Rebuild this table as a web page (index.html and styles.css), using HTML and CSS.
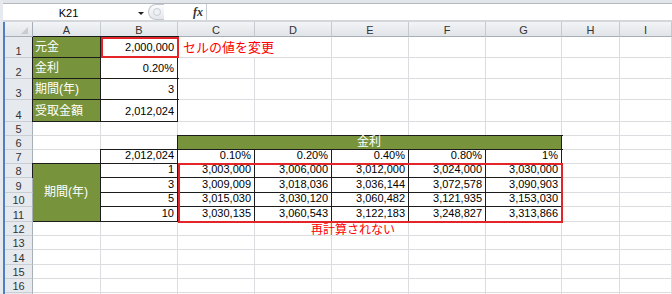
FILE: index.html
```html
<!DOCTYPE html>
<html lang="ja">
<head>
<meta charset="utf-8">
<title>Book1</title>
<link rel="stylesheet" href="styles.css">
</head>
<body>
<div class="app">
  <div class="fbar">
    <div class="namebox"><span class="name">K21</span><span class="dd"></span></div>
    <div class="grip"><span class="dot"></span></div>
    <div class="fx">fx</div>
    <div class="finput"></div>
  </div>
  <div class="sheetwrap">
    <div class="sheet">
      <!-- column headers -->
      <div class="corner"></div>
      <div class="h">A</div><div class="h">B</div><div class="h">C</div><div class="h">D</div><div class="h">E</div><div class="h">F</div><div class="h">G</div><div class="h">H</div><div class="h">I</div>

      <!-- 1 -->
      <div class="rh">1</div>
      <div class="c g bx t">元金</div>
      <div class="c r bx t">2,000,000</div>
      <div class="c note t span2">セルの値を変更</div>
      <div class="c"></div><div class="c"></div><div class="c"></div><div class="c"></div><div class="c"></div>

      <!-- 2 -->
      <div class="rh">2</div>
      <div class="c g bx t">金利</div>
      <div class="c r bx t">0.20%</div>
      <div class="c"></div><div class="c"></div><div class="c"></div><div class="c"></div><div class="c"></div><div class="c"></div><div class="c"></div>

      <!-- 3 -->
      <div class="rh">3</div>
      <div class="c g bx t">期間(年)</div>
      <div class="c r bx t">3</div>
      <div class="c"></div><div class="c"></div><div class="c"></div><div class="c"></div><div class="c"></div><div class="c"></div><div class="c"></div>

      <!-- 4 -->
      <div class="rh">4</div>
      <div class="c g bx t">受取金額</div>
      <div class="c r bx t">2,012,024</div>
      <div class="c"></div><div class="c"></div><div class="c"></div><div class="c"></div><div class="c"></div><div class="c"></div><div class="c"></div>

      <!-- 5 -->
      <div class="rh">5</div>
      <div class="c"></div><div class="c"></div><div class="c"></div><div class="c"></div><div class="c"></div><div class="c"></div><div class="c"></div><div class="c"></div><div class="c"></div>

      <!-- 6 -->
      <div class="rh">6</div>
      <div class="c"></div><div class="c"></div>
      <div class="c g bx mid span5">金利</div>
      <div class="c"></div><div class="c"></div>

      <!-- 7 -->
      <div class="rh">7</div>
      <div class="c"></div>
      <div class="c r bx">2,012,024</div>
      <div class="c r bx">0.10%</div>
      <div class="c r bx">0.20%</div>
      <div class="c r bx">0.40%</div>
      <div class="c r bx">0.80%</div>
      <div class="c r bx">1%</div>
      <div class="c"></div><div class="c"></div>

      <!-- 8 -->
      <div class="rh">8</div>
      <div class="c g bx mid rows4">期間(年)</div>
      <div class="c r bx">1</div>
      <div class="c r bx">3,003,000</div>
      <div class="c r bx">3,006,000</div>
      <div class="c r bx">3,012,000</div>
      <div class="c r bx">3,024,000</div>
      <div class="c r bx">3,030,000</div>
      <div class="c"></div><div class="c"></div>

      <!-- 9 -->
      <div class="rh">9</div>
      <div class="c r bx">3</div>
      <div class="c r bx">3,009,009</div>
      <div class="c r bx">3,018,036</div>
      <div class="c r bx">3,036,144</div>
      <div class="c r bx">3,072,578</div>
      <div class="c r bx">3,090,903</div>
      <div class="c"></div><div class="c"></div>

      <!-- 10 -->
      <div class="rh">10</div>
      <div class="c r bx">5</div>
      <div class="c r bx">3,015,030</div>
      <div class="c r bx">3,030,120</div>
      <div class="c r bx">3,060,482</div>
      <div class="c r bx">3,121,935</div>
      <div class="c r bx">3,153,030</div>
      <div class="c"></div><div class="c"></div>

      <!-- 11 -->
      <div class="rh">11</div>
      <div class="c r bx">10</div>
      <div class="c r bx">3,030,135</div>
      <div class="c r bx">3,060,543</div>
      <div class="c r bx">3,122,183</div>
      <div class="c r bx">3,248,827</div>
      <div class="c r bx">3,313,866</div>
      <div class="c"></div><div class="c"></div>

      <!-- 12 -->
      <div class="rh">12</div>
      <div class="c"></div><div class="c"></div><div class="c"></div>
      <div class="c note2 span2"><span>再計算されない</span></div>
      <div class="c"></div><div class="c"></div><div class="c"></div><div class="c"></div>

      <!-- 13 -->
      <div class="rh">13</div>
      <div class="c"></div><div class="c"></div><div class="c"></div><div class="c"></div><div class="c"></div><div class="c"></div><div class="c"></div><div class="c"></div><div class="c"></div>

      <!-- 14 -->
      <div class="rh">14</div>
      <div class="c"></div><div class="c"></div><div class="c"></div><div class="c"></div><div class="c"></div><div class="c"></div><div class="c"></div><div class="c"></div><div class="c"></div>

      <!-- 15 -->
      <div class="rh">15</div>
      <div class="c"></div><div class="c"></div><div class="c"></div><div class="c"></div><div class="c"></div><div class="c"></div><div class="c"></div><div class="c"></div><div class="c"></div>

      <!-- 16 -->
      <div class="rh">16</div>
      <div class="c"></div><div class="c"></div><div class="c"></div><div class="c"></div><div class="c"></div><div class="c"></div><div class="c"></div><div class="c"></div><div class="c"></div>

      <!-- 17, only its top edge shows -->
      <div class="rh"></div>
      <div class="c"></div><div class="c"></div><div class="c"></div><div class="c"></div><div class="c"></div><div class="c"></div><div class="c"></div><div class="c"></div><div class="c"></div>
    </div>

    <!-- thick red outlines drawn over the cells -->
    <div class="outline outline-input"></div>
    <div class="outline outline-table"></div>
  </div>
</div>
</body>
</html>
```

FILE: styles.css
```css
* {
  box-sizing: border-box;
}

body {
  margin: 0;
  width: 672px;
  height: 294px;
  overflow: hidden;
  background: #fff;
  color: #000;
  font-family: "Liberation Sans", "Noto Sans CJK JP", sans-serif;
}

.app {
  height: 294px;
  display: flex;
  flex-direction: column;
  border-left: 3px solid #e6e9ee;
}

/* formula bar */
.fbar {
  flex: none;
  height: 22px;
  display: flex;
  padding: 4px 0 2px;
  background: linear-gradient(#e2e6eb 0 3px, #b3b9c0 3px 4px, #fff 4px 20px, #d3d7dc 20px 22px);
}

.namebox {
  width: 145px;
  display: flex;
  align-items: center;
}

.name {
  flex: 1;
  text-align: center;
  font-size: 11px;
  line-height: 12px;
  padding-top: 1px;
}

.dd {
  width: 14px;
  display: flex;
  justify-content: center;
  align-items: center;
}

.dd::before {
  content: "";
  border-left: 3px solid transparent;
  border-right: 3px solid transparent;
  border-top: 3px solid #222;
  margin-top: 2px;
}

.grip {
  width: 16px;
  height: 16px;
  border: 1px solid #c3c8ce;
  border-right: none;
  border-radius: 9px 0 0 9px;
  background: linear-gradient(#fbfcfd, #e4e7eb);
  display: flex;
  align-items: center;
  justify-content: center;
}

.dot {
  width: 8px;
  height: 8px;
  border-radius: 50%;
  border: 1px solid #c9ced4;
  background: #eff1f4;
}

.fx {
  width: 43px;
  display: flex;
  align-items: center;
  justify-content: flex-end;
  padding-right: 3px;
  border-right: 1px solid #c6cbd1;
  font-family: "Liberation Serif", serif;
  font-style: italic;
  font-weight: bold;
  font-size: 12px;
  color: #333;
}

.finput {
  flex: 1;
}

/* worksheet */
.sheetwrap {
  flex: 1;
  position: relative;
  border-left: 2px solid #4f80c2;
  overflow: hidden;
}

.sheet {
  display: grid;
  grid-template-columns: 28px 68px 77px 77px 77px 77px 77px 76px 58px 1fr;
  grid-template-rows: 15px 21px 21px 21px 22px 14px 14px 14px 14px 15px 14px 15px 14px 14px 15px 14px 14px 14px;
}

.corner,
.h {
  background: linear-gradient(#f2f4f6, #e1e4e8);
  border-right: 1px solid #c5cad0;
  border-bottom: 1px solid #a7aeb6;
}

.corner {
  position: relative;
  border-right-color: #a7aeb6;
}

.corner::after {
  content: "";
  position: absolute;
  right: 4px;
  bottom: 2px;
  border-left: 7px solid transparent;
  border-bottom: 7px solid #c8ccd1;
}

.h {
  display: flex;
  align-items: flex-end;
  justify-content: center;
  font-size: 11px;
  line-height: 12px;
  color: #333;
}

.rh {
  display: flex;
  align-items: flex-end;
  justify-content: center;
  background: #e6e9ed;
  border-right: 1px solid #a7aeb6;
  border-bottom: 1px solid #c9ced4;
  font-size: 11px;
  line-height: 12px;
  color: #333;
}

.c {
  display: flex;
  align-items: flex-end;
  padding: 0 3px 1px;
  background: #fff;
  border-right: 1px solid #dadcdf;
  border-bottom: 1px solid #dadcdf;
  font-size: 11px;
  line-height: 13px;
  white-space: nowrap;
}

.t {
  padding-bottom: 3px;
}

.r {
  justify-content: flex-end;
}

.g {
  background: #77933c;
  color: #fff;
  font-size: 12px;
  padding-left: 2px;
}

.bx {
  border-right-color: #1c1c1c;
  border-bottom-color: #1c1c1c;
  box-shadow: 0 0 0 1px #1c1c1c;
}

.mid {
  align-items: center;
  justify-content: center;
}

.span2 {
  grid-column: span 2;
}

.span5 {
  grid-column: span 5;
}

.rows4 {
  grid-row: span 4;
}

.note {
  color: #f00;
  font-size: 13px;
  padding-left: 5px;
}

.note2 {
  color: #f00;
  font-size: 12px;
  padding-left: 56px;
}

.note2 span {
  margin-bottom: -3px;
}

/* thick red cell outlines */
.outline {
  position: absolute;
  border: 2px solid #e3252a;
  pointer-events: none;
}

.outline-input {
  left: 96px;
  top: 15px;
  width: 78px;
  height: 21px;
}

.outline-table {
  left: 173px;
  top: 141px;
  width: 385px;
  height: 60px;
}
```
